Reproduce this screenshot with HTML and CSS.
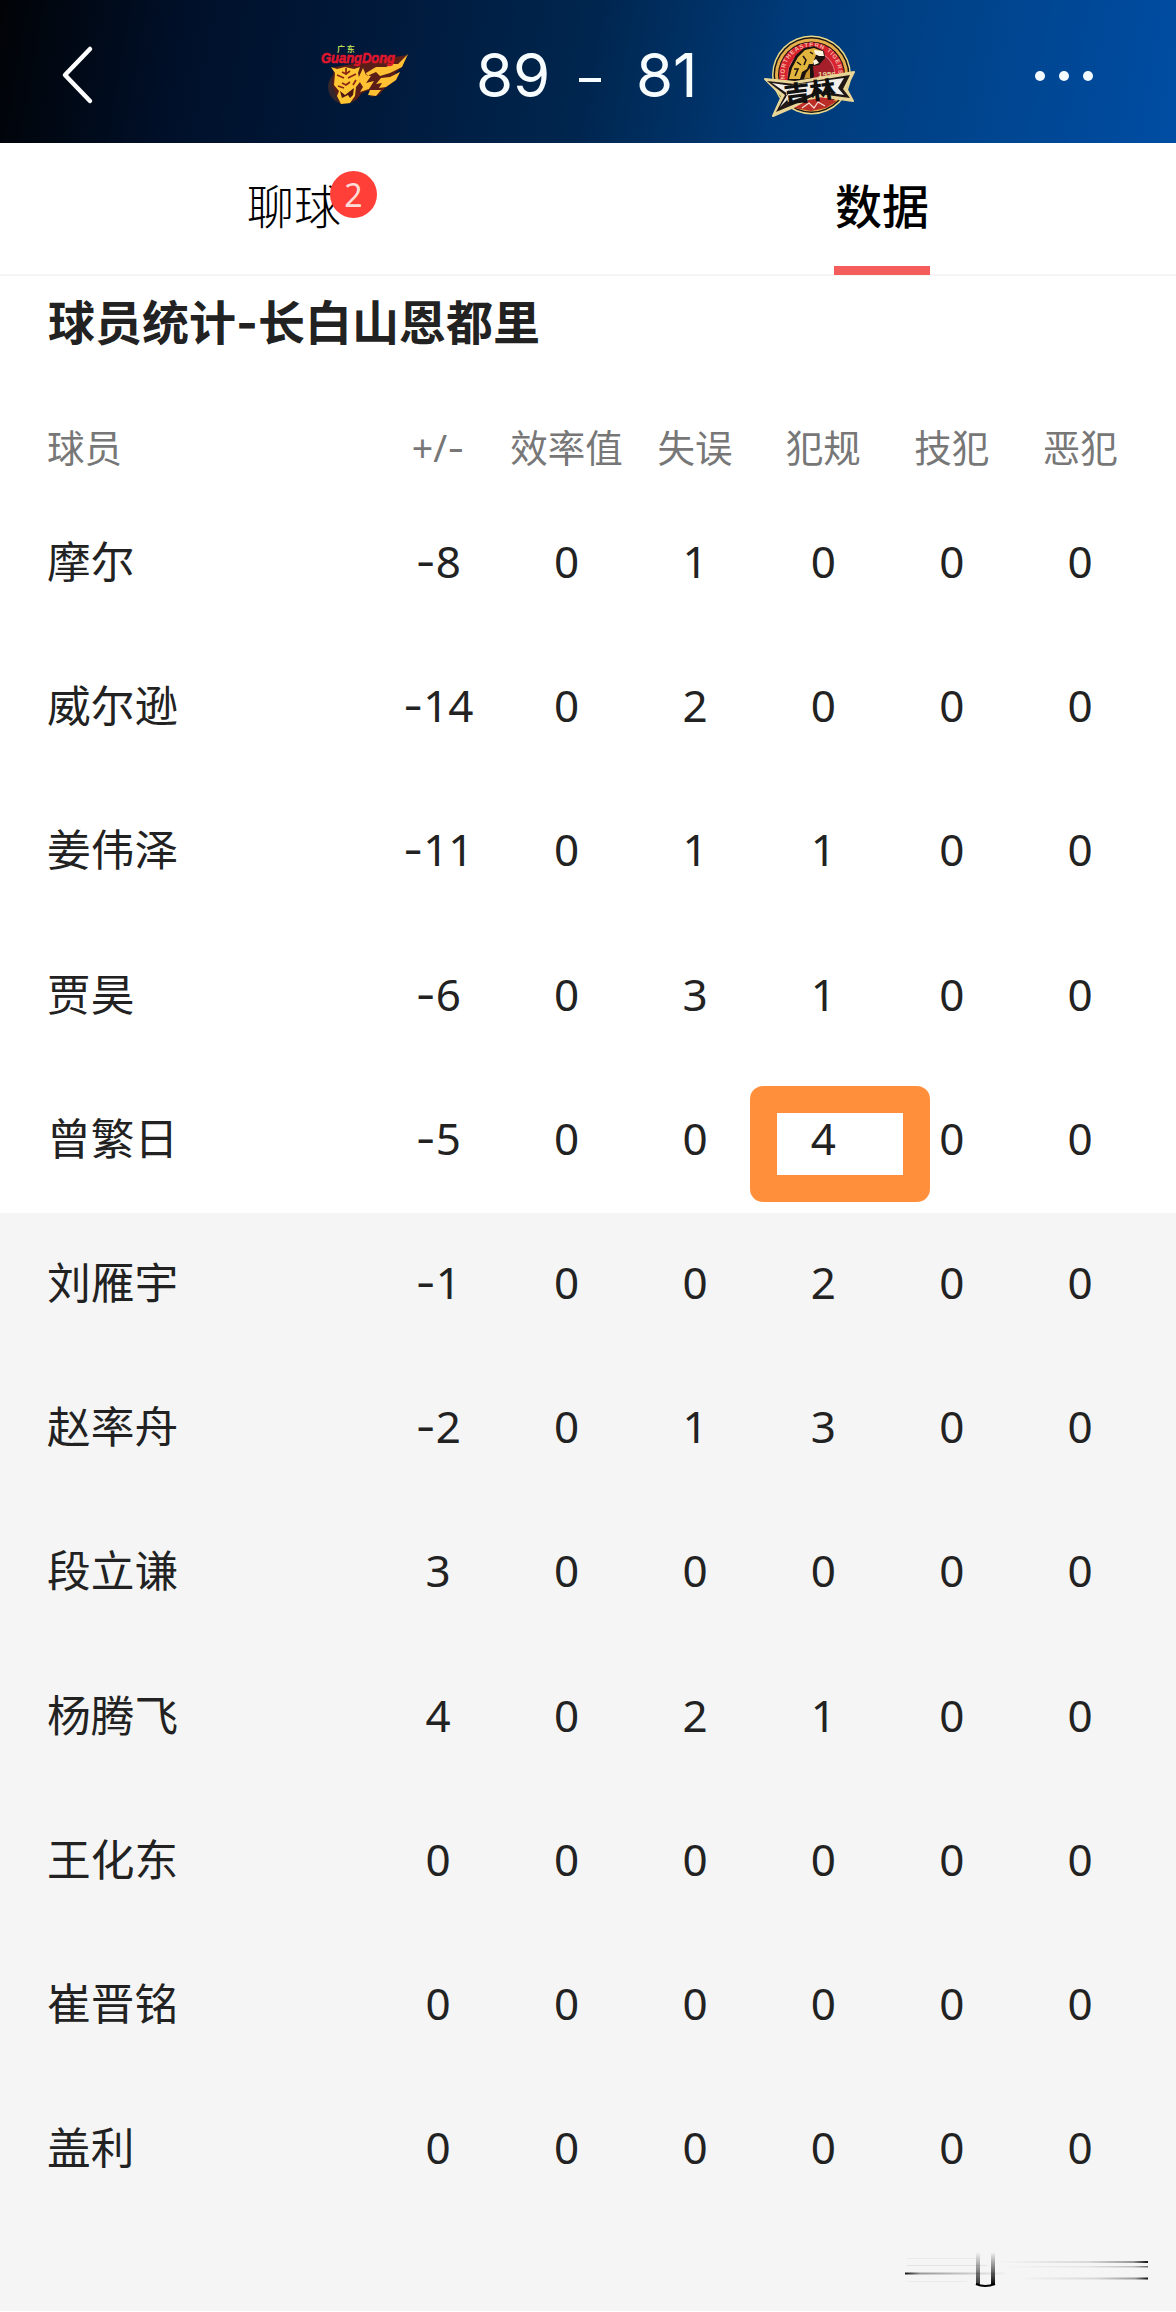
FILE: index.html
```
<!DOCTYPE html>
<html lang="zh-CN">
<head>
    <meta charset="UTF-8">
    <meta name="viewport" content="width=device-width, initial-scale=1.0">
    <title>球员统计</title>
    <link rel="stylesheet" href="styles.css">
</head>
<body>
    <header id="topbar">
        <svg class="back" viewBox="0 0 36 62" width="36" height="62">
            <path d="M31 4 L6 30 L31 56" fill="none" stroke="#fff" stroke-width="4.5" stroke-linecap="round" stroke-linejoin="round"/>
        </svg>
        <div class="scorebox">
            <svg class="guangdong" viewBox="0 0 92 62" width="92" height="62">
                <ellipse cx="25" cy="42" rx="17" ry="17" fill="#33262c"/>
                <path d="M87 10 L82 22 L74 29 L80 27 L76 35 L65 43 L59 50 L51 52 L50 45 L42 48 L36 55 L20 59 L12 40 L14 22 Z" fill="#5a1d17"/>
                <path d="M11 22 L17 24 L25 22 L34 24 L40 22 L38 28 L40 37 L36 42 L35 51 L30 58 L21 59 L17 51 L19 46 L14 40 L15 28 Z" fill="#ffc633"/>
                <path d="M88 9 L82 22 L70 28 L60 31 L56 27 L47 31 L46 28 L56 22 L66 22 L72 19 L78 19 Z M43 23 L38 34 L43 42 L40 47 L49 44 L54 36 L46 38 L51 31 L46 30 Z M80 27 L76 35 L66 42 L59 43 L62 38 L56 39 L61 33 L70 32 Z M50 45 L61 45 L56 51 L48 50 Z" fill="#ffc033"/>
                <path d="M17 30 L24 33 M28 33 L36 29 M22 27 L26 29 L30 26 M22 38 L26 40 L30 37 M18 41 L24 43 M33 40 L36 35 M26 23 V30" stroke="#8c2514" stroke-width="1.700" fill="none"/>
                <path d="M20 46 L25 50 L34 43 L33 50 L30 53 L28 50 L22 53 Z" fill="#4a1512"/>
                <text x="17" y="7" class="gdcn">广 东</text>
                <text x="1" y="18" textLength="74" lengthAdjust="spacingAndGlyphs" class="gden">GuangDong</text>
            </svg>
            <span class="score home">89</span>
            <span class="dash"></span>
            <span class="score away">81</span>
            <svg class="jilin" viewBox="0 0 92 84" width="92" height="84">
                <circle cx="47.500" cy="41" r="39.500" fill="#e9d98a"/>
                <circle cx="47.500" cy="41" r="38" fill="#191412"/>
                <circle cx="47.500" cy="41" r="36.500" fill="#e6ae4b"/>
                <circle cx="47.500" cy="41" r="33.500" fill="#1d1412"/>
                <circle cx="47.500" cy="41" r="32.500" fill="#d8232f"/>
                <path id="arc" d="M21 45 A27 27 0 1 1 74 45" fill="none"/>
                <text class="jlen" textLength="90" lengthAdjust="spacing"><textPath href="#arc">NORTHEASTERN TIGERS</textPath></text>
                <circle cx="47.500" cy="41" r="24" fill="#e0707a"/>
                <circle cx="47.500" cy="41" r="23" fill="#a51f2b"/>
                <path d="M23 50 L25 34 L32 21 L40 14 L50 12 L60 17 L61 24 L55 31 L49 32 L50 42 L45 50 Z" fill="#1a1210"/>
                <!-- tiger: back, cheek, muzzle -->
                <path d="M25 45 L28 34 L34 23 L41 16 L50 14 L58 17 L52 21 L50 26 L49 30 L45 30 L43 35 L38 38 L36 45 Z" fill="#e2b53e"/>
                <path d="M50 16 L59 17 L60 22 L55 22 L51 20 Z M49 27 L52 25 L55 29 L50 31 Z" fill="#fff5e0"/>
                <path d="M40 45 L42 39 L46 34 L46 44 Z" fill="#c9952d"/>
                <path d="M33 28 L37 31 M39 22 L42 26 L40 31 M30 35 L34 35 L31 42 M46 18 L49 20" fill="none" stroke="#1a1210" stroke-width="1.500"/>
                <path d="M1 45 L31 48 L90 38 L82 54 L89 67 L55 62 L9 82 L18 62 Z" fill="#e9d596" stroke="#e9d596" stroke-width="2" stroke-linejoin="round"/>
                <path d="M3 47 L31 50 L86 41 L79 55 L86 64 L55 60 L12 78 L21 61 Z" fill="#211816"/>
                <path d="M8 49 L28 52 L22 60 L23 66 L16 73 L24 60 Z M28 51 L80 44 L74 54 L80 61 L56 57 L24 68 L22 62 Z" fill="#f2eee9"/>
                <path d="M30 74 L44 66 L57 64 L73 67 L62 74 L47 77 Z" fill="#bb2e28"/>
                <path d="M38 74 L45 69 L50 74 L54 68 L61 72" fill="none" stroke="#f6ded6" stroke-width="1.200"/>
                <text x="54" y="43" class="year">1956</text>
                <text x="20" y="66" transform="rotate(-7 47 60)" textLength="52" lengthAdjust="spacingAndGlyphs" class="jlcn">吉林</text>
            </svg>
        </div>
        <svg class="more" viewBox="0 0 60 12" width="60" height="12">
            <circle cx="6" cy="6" r="5" fill="#f4fbff"/>
            <circle cx="30" cy="6" r="5" fill="#f4fbff"/>
            <circle cx="54" cy="6" r="5" fill="#f4fbff"/>
        </svg>
    </header>

    <nav id="tabs">
        <div class="tab"><span class="tabname">聊球<b class="badge">2</b></span></div>
        <div class="tab active"><span class="tabname">数据</span></div>
    </nav>

    <h2 id="title">球员统计<i>-</i>长白山恩都里</h2>

    <div id="stats">
        <div class="row head"><span class="name">球员</span><span>+/<i>-</i></span><span>效率值</span><span>失误</span><span>犯规</span><span>技犯</span><span>恶犯</span></div>
        <div class="row"><span class="name">摩尔</span><span><i>-</i>8</span><span>0</span><span>1</span><span>0</span><span>0</span><span>0</span></div>
        <div class="row"><span class="name">威尔逊</span><span><i>-</i>14</span><span>0</span><span>2</span><span>0</span><span>0</span><span>0</span></div>
        <div class="row"><span class="name">姜伟泽</span><span><i>-</i>11</span><span>0</span><span>1</span><span>1</span><span>0</span><span>0</span></div>
        <div class="row"><span class="name">贾昊</span><span><i>-</i>6</span><span>0</span><span>3</span><span>1</span><span>0</span><span>0</span></div>
        <div class="row"><span class="name">曾繁日</span><span><i>-</i>5</span><span>0</span><span>0</span><span class="marked">4</span><span>0</span><span>0</span></div>
        <!-- bench players -->
        <div class="row bench"><span class="name">刘雁宇</span><span><i>-</i>1</span><span>0</span><span>0</span><span>2</span><span>0</span><span>0</span></div>
        <div class="row bench"><span class="name">赵率舟</span><span><i>-</i>2</span><span>0</span><span>1</span><span>3</span><span>0</span><span>0</span></div>
        <div class="row bench"><span class="name">段立谦</span><span>3</span><span>0</span><span>0</span><span>0</span><span>0</span><span>0</span></div>
        <div class="row bench"><span class="name">杨腾飞</span><span>4</span><span>0</span><span>2</span><span>1</span><span>0</span><span>0</span></div>
        <div class="row bench"><span class="name">王化东</span><span>0</span><span>0</span><span>0</span><span>0</span><span>0</span><span>0</span></div>
        <div class="row bench"><span class="name">崔晋铭</span><span>0</span><span>0</span><span>0</span><span>0</span><span>0</span><span>0</span></div>
        <div class="row bench"><span class="name">盖利</span><span>0</span><span>0</span><span>0</span><span>0</span><span>0</span><span>0</span></div>
    </div>

    <footer id="bottom">
        <svg viewBox="0 0 248 42" width="248" height="42">
            <defs>
                <linearGradient id="fadeleft"><stop offset="0" stop-color="#111"/><stop offset=".15" stop-color="#999"/><stop offset="1" stop-color="#f0f0f0"/></linearGradient>
                <linearGradient id="faderight"><stop offset="0" stop-color="#f5f5f5"/><stop offset=".6" stop-color="#d8d8d8"/><stop offset=".9" stop-color="#999"/><stop offset="1" stop-color="#111"/></linearGradient>
                <linearGradient id="fadedown" x2="0" y2="1"><stop offset="0" stop-color="#000" stop-opacity="0"/><stop offset="1" stop-color="#000"/></linearGradient>
            </defs>
            <rect x="4" y="9" width="70" height="1" fill="#e9e9e9"/>
            <rect x="4" y="16" width="80" height="1" fill="#e4e4e4"/>
            <rect x="2" y="23.500" width="100" height="2" fill="url(#fadeleft)"/>
            <rect x="4" y="32" width="60" height="1" fill="#ebebeb"/>
            <rect x="95" y="12" width="150" height="2" fill="url(#faderight)"/>
            <rect x="95" y="17" width="150" height="1.500" fill="url(#faderight)" opacity=".6"/>
            <rect x="115" y="28.500" width="130" height="2" fill="url(#faderight)"/>
            <rect x="73" y="3" width="4" height="33" fill="url(#fadedown)" opacity=".8"/>
            <rect x="88" y="3" width="4" height="33" fill="url(#fadedown)"/>
            <path d="M73 35 Q82 39 92 35" fill="none" stroke="#000" stroke-width="2.200"/>
        </svg>
    </footer>
</body>
</html>
```
FILE: styles.css
```
body{
    margin: 0;
    background-color: #fff;
    color: #222;
    font-family: "Noto Sans", "Noto Sans CJK SC", sans-serif;
}

i{
    font-family: Inter, sans-serif;
    font-style: normal;
    line-height: 1;
}

#topbar{
    display: flex;
    align-items: center;
    box-sizing: border-box;
    height: 143px;
    padding: 8px 82px 0 59px;
    background: linear-gradient(100deg, #010306 0%, #00102a 16%, #001a3c 33%, #00264f 50%, #003a78 66%, #00458f 84%, #004da3 100%);
}

.scorebox{
    display: flex;
    align-items: center;
    margin-left: 225px;
}

.scorebox svg{
    overflow: visible;
}

.score{
    width: 70px;
    margin-top: -2px;
    font-family: Inter, sans-serif;
    font-size: 60px;
    line-height: 60px;
    color: #f7fcff;
}

.home{
    margin-left: 64px;
}

.dash{
    width: 22px;
    height: 4px;
    margin: 9px 35px 0 33px;
    background-color: #f7fcff;
}

.jilin{
    margin-left: 58px;
}

.more{
    margin-left: auto;
}

.gdcn{
    font: 700 8px "Noto Sans CJK SC", sans-serif;
    fill: #b8d653;
}

.gden{
    font: italic 900 14px "Liberation Sans", sans-serif;
    fill: #e0162d;
    stroke: #e0162d;
    stroke-width: .6;
}

.jlen{
    font: 700 6px "Liberation Sans", sans-serif;
    fill: #f3b9a4;
}

.year{
    font: 700 8px "Liberation Sans", sans-serif;
    fill: #e9d596;
}

.jlcn{
    font: 900 23px "Noto Sans CJK SC", sans-serif;
    fill: #111;
}

#tabs{
    display: flex;
    height: 131px;
    border-bottom: 2px solid #f5f5f5;
}

.tab{
    flex: 1;
    display: flex;
    justify-content: center;
    font-size: 47px;
    color: #000;
}

.tabname{
    position: relative;
    box-sizing: border-box;
    height: 132px;
    line-height: 122px;
    font-family: "Noto Sans CJK SC", sans-serif;
    font-weight: 300;
}

.active .tabname{
    padding: 0 1px;
    border-bottom: 9px solid #f55c5c;
    font-weight: 500;
}

.badge{
    position: absolute;
    top: 28px;
    right: -36px;
    width: 47px;
    height: 47px;
    border-radius: 50%;
    background-color: #ff3f38;
    color: #ffdcd8;
    font: 400 32px/47px "Noto Sans", sans-serif;
    text-align: center;
}

#title{
    margin: 0;
    padding-left: 48px;
    height: 92px;
    line-height: 92px;
    font-size: 47px;
    font-weight: 700;
}

#stats{
    font-size: 44px;
}

.row{
    display: grid;
    grid-template-columns: 327px repeat(6, 128.4px);
    box-sizing: border-box;
    height: 144.2px;
    padding-left: 47px;
    line-height: 139px;
    text-align: center;
}

.name{
    font-size: 43.700px;
    line-height: 139px;
    text-align: left;
}

.head, .head .name{
    line-height: 160px;
    font-size: 37.5px;
    color: #777;
}

.head{
    height: 124px;
}

.bench{
    background-color: #f5f5f5;
}

/* foul count circled in orange */
.marked{
    position: relative;
}

.marked::after{
    content: "";
    position: absolute;
    left: -9px;
    top: 17px;
    width: 126px;
    height: 62px;
    border: 27px solid #ff8f3b;
    border-radius: 13px;
}

#bottom{
    display: flex;
    justify-content: flex-end;
    box-sizing: border-box;
    height: 89px;
    padding: 27px 25px 0 0;
    background-color: #f5f5f5;
}
```
